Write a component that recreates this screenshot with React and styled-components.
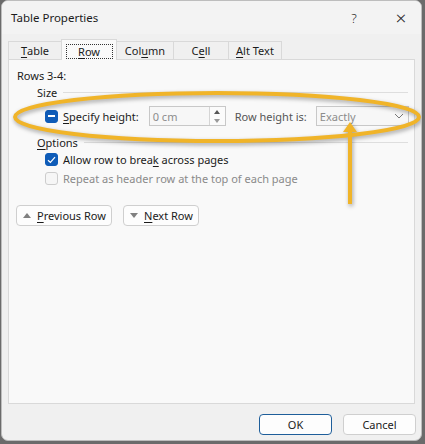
import React from 'react';
import styled, { createGlobalStyle } from 'styled-components';

const GlobalStyle = createGlobalStyle`
  html, body {
    margin: 0;
    padding: 0;
    background: #6b6b6b;
  }
  body {
    font-family: "Noto Sans", "Open Sans", sans-serif;
    font-size: 11px;
    color: #1b1b1b;
  }
`;

// --- Window chrome ---
const Window = styled.div`
  position: relative;
  width: 421px;
  height: 441px;
  margin-left: 1px;
  background: #f0f0f0;
  border: 1px solid #bdbdbd;
  border-radius: 7px;
  box-sizing: border-box;
  display: flex;
  flex-direction: column;
  overflow: hidden;
`;

const TitleBar = styled.div`
  height: 33px;
  display: flex;
  align-items: center;
  padding-left: 9px;
  background: #f3f3f3;
`;

const Title = styled.div`
  flex: 1;
  font-size: 11.5px;
`;

const TitleButton = styled.div`
  width: ${({ $w }) => $w}px;
  text-align: center;
  font-size: ${({ $big }) => ($big ? '19px' : '13px')};
  font-weight: 300;
  color: #222;
`;

// --- Tabs ---
const TabStrip = styled.div`
  display: flex;
  align-items: flex-end;
  height: 25px;
  padding-left: 7px;
`;

const Tab = styled.div`
  width: ${({ $w }) => $w}px;
  height: ${({ $active }) => ($active ? '21px' : '18px')};
  display: flex;
  align-items: center;
  justify-content: center;
  background: ${({ $active }) => ($active ? '#f9f9f9' : '#f0f0f0')};
  border: 1px solid #d9d9d9;
  border-bottom: none;
  margin-left: -1px;
  margin-bottom: ${({ $active }) => ($active ? '-1px' : '0')};
  position: relative;
  z-index: ${({ $active }) => ($active ? 2 : 1)};
  box-sizing: border-box;
`;

const FocusBox = styled.span`
  width: 47px;
  height: 15px;
  box-sizing: border-box;
  border: 1px dotted #333;
  display: flex;
  align-items: center;
  justify-content: center;
  margin-top: 2px;
`;

const Panel = styled.div`
  margin: 0 6px;
  height: 345px;
  background: #f9f9f9;
  border: 1px solid #d9d9d9;
  box-sizing: border-box;
  padding: 6px 8px;
  display: flex;
  flex-direction: column;
`;

const Line = styled.div`
  height: ${({ $h }) => $h || 19}px;
  display: flex;
  align-items: center;
  white-space: nowrap;
  margin-left: ${({ $indent }) => $indent || 0}px;
  color: ${({ $disabled }) => ($disabled ? '#8a8a8a' : 'inherit')};
`;

const GroupHead = styled.div`
  display: flex;
  align-items: center;
  gap: 6px;
  margin-left: 20px;
  height: ${({ $h }) => $h || 17}px;
  &::after {
    content: '';
    flex: 1;
    border-top: 1px solid #dedede;
    margin-right: -2px;
  }
`;

const SizeRow = styled.div`
  display: flex;
  align-items: center;
  white-space: nowrap;
  height: 22px;
  margin: 4px 0 7px 28px;
`;

const Box = styled.span`
  width: 13px;
  height: 13px;
  flex: none;
  border-radius: 3px;
  box-sizing: border-box;
  margin-right: 5px;
  display: inline-flex;
  align-items: center;
  justify-content: center;
  background: ${({ $on }) => ($on ? '#0f5cb8' : '#f6f6f6')};
  border: 1px solid ${({ $on }) => ($on ? '#0f5cb8' : '#cdcdcd')};
`;

const DashMark = styled.span`
  width: 7px;
  height: 1.5px;
  background: #fff;
`;

const Field = styled.div`
  display: flex;
  align-items: center;
  flex: none;
  height: 20px;
  width: ${({ $w }) => $w}px;
  margin-left: ${({ $ml }) => $ml}px;
  border: 1px solid #c8c8c8;
  background: #f7f7f7;
  box-sizing: border-box;
  color: #8c8c8c;
`;

const FieldText = styled.span`
  flex: 1;
  padding-left: 3px;
`;

const Spinner = styled.div`
  width: 15px;
  height: 18px;
  border-left: 1px solid #d5d5d5;
  display: flex;
  flex-direction: column;
  align-items: center;
  justify-content: space-around;
  background: #fbfbfb;
`;

const Caret = styled.span`
  flex: none;
  width: 0;
  height: 0;
  border-left: ${({ $s }) => $s || 3}px solid transparent;
  border-right: ${({ $s }) => $s || 3}px solid transparent;
  ${({ $down, $c, $s }) =>
    $down
      ? `border-top: ${($s || 3) + 1}px solid ${$c};`
      : `border-bottom: ${($s || 3) + 1}px solid ${$c};`}
`;

const Label = styled.span`
  margin-left: ${({ $ml }) => $ml || 0}px;
  color: ${({ $muted }) => ($muted ? '#555' : 'inherit')};
`;

const Chevron = styled.div`
  width: 18px;
  height: 18px;
  display: flex;
  align-items: center;
  justify-content: center;
`;

const ButtonRow = styled.div`
  display: flex;
  gap: 11px;
  margin-top: 17px;
  margin-left: -1px;
`;

const Button = styled.button`
  font: inherit;
  color: #1b1b1b;
  white-space: nowrap;
  height: 21px;
  padding: 0 6px;
  display: flex;
  align-items: center;
  gap: 6px;
  background: #fdfdfd;
  border: 1px solid ${({ $primary }) => ($primary ? '#1e5e9a' : '#cfcfcf')};
  border-radius: 4px;
  box-sizing: border-box;
  width: ${({ $w }) => $w}px;
  justify-content: ${({ $center }) => ($center ? 'center' : 'flex-start')};
`;

const Footer = styled.div`
  display: flex;
  justify-content: flex-end;
  gap: 11px;
  padding: 10px 5px 0 0;
`;

const Overlay = styled.svg`
  position: absolute;
  left: 0;
  top: 0;
  pointer-events: none;
  filter: drop-shadow(1px 2px 2px rgba(0, 0, 0, 0.35));
`;

const U = styled.u`
  text-underline-offset: 2px;
`;

const Check = () => (
  <svg width="9" height="8" viewBox="0 0 9 8">
    <path d="M1 4.2 L3.4 6.5 L8 1.2" fill="none" stroke="#fff" strokeWidth="1.2" />
  </svg>
);

export default function App() {
  return (
    <>
      <GlobalStyle />
      <Window>
        <TitleBar>
          <Title>Table Properties</Title>
          <TitleButton $w={54}>?</TitleButton>
          <TitleButton $w={40} $big>×</TitleButton>
        </TitleBar>

        <TabStrip>
          <Tab $w={54}><U>T</U>able</Tab>
          <Tab $active $w={56}><FocusBox><U>R</U>ow</FocusBox></Tab>
          <Tab $w={58}>Col<U>u</U>mn</Tab>
          <Tab $w={56}>C<U>e</U>ll</Tab>
          <Tab $w={54}><U>A</U>lt Text</Tab>
        </TabStrip>

        <Panel>
          <Line $h={18}>Rows 3-4:</Line>
          <GroupHead>Size</GroupHead>
          <SizeRow>
            <Box $on><DashMark /></Box>
            <Label><U>S</U>pecify height:</Label>
            <Field $w={77} $ml={10}>
              <FieldText>0 cm</FieldText>
              <Spinner>
                <Caret $c="#555" />
                <Caret $down $c="#999" />
              </Spinner>
            </Field>
            <Label $ml={9} $muted>Row height is:</Label>
            <Field $w={93} $ml={9}>
              <FieldText>Exactly</FieldText>
              <Chevron>
                <svg width="10" height="6" viewBox="0 0 10 6">
                  <path d="M1 1 L5 5 L9 1" fill="none" stroke="#777" strokeWidth="1" />
                </svg>
              </Chevron>
            </Field>
          </SizeRow>
          <GroupHead $h={16}><span><U>O</U>ptions</span></GroupHead>
          <Line $indent={28}>
            <Box $on><Check /></Box>
            <span>Allow row to brea<U>k</U> across pages</span>
          </Line>
          <Line $indent={28} $disabled>
            <Box />
            <span>Repeat as header row at the top of each page</span>
          </Line>
          <ButtonRow>
            <Button $w={96}>
              <Caret $s={4} $c="#808080" />
              <span><U>P</U>revious Row</span>
            </Button>
            <Button $w={76}>
              <Caret $s={4} $down $c="#808080" />
              <span><U>N</U>ext Row</span>
            </Button>
          </ButtonRow>
        </Panel>

        <Footer>
          <Button $primary $center $w={73}>OK</Button>
          <Button $center $w={73}>Cancel</Button>
        </Footer>

        <Overlay width="425" height="444" viewBox="0 0 425 444">
          <ellipse cx="215" cy="116" rx="202" ry="24" fill="none" stroke="#f0b429" strokeWidth="4" />
          <line x1="348" y1="128" x2="348" y2="203" stroke="#f0b429" strokeWidth="4" />
          <path d="M348 121 L355 131 L341 131 Z" fill="#f0b429" />
        </Overlay>
      </Window>
    </>
  );
}
